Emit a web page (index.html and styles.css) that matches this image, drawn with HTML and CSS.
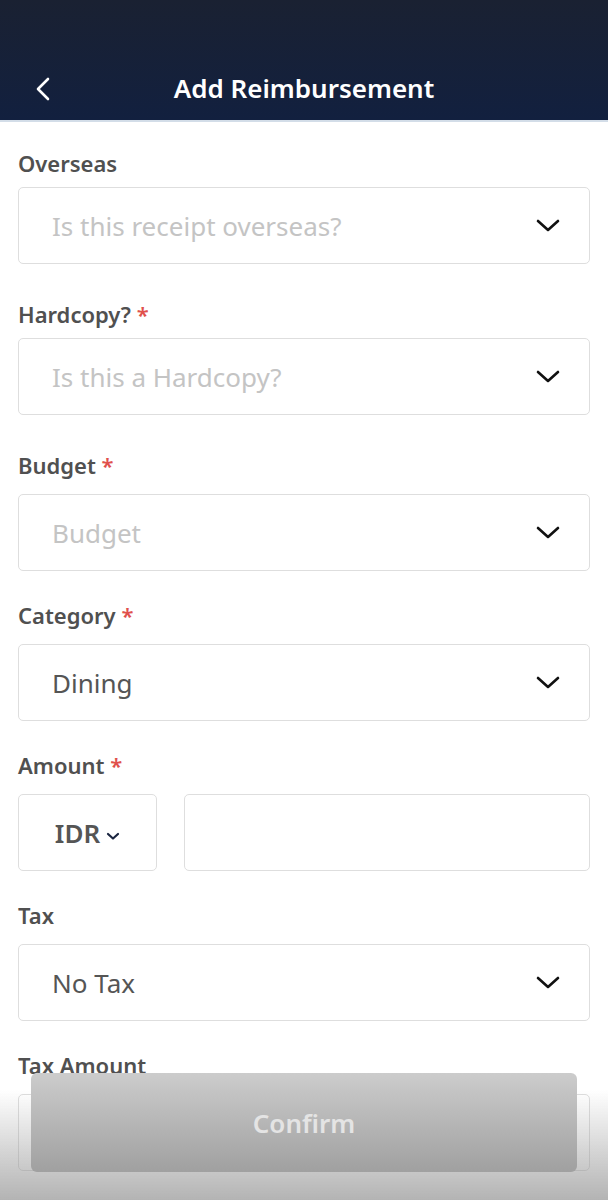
FILE: index.html
```html
<!DOCTYPE html>
<html lang="en">
<head>
    <meta charset="UTF-8">
    <title>Add Reimbursement</title>
    <link rel="stylesheet" href="styles.css">
</head>
<body>
    <header class="topbar">
        <button class="back" aria-label="Back">
            <svg width="14" height="24" viewBox="0 0 14 24"><polyline points="12,2 2,12 12,22" fill="none" stroke="#fff" stroke-width="2.6" stroke-linecap="round" stroke-linejoin="round"/></svg>
        </button>
        <h1 class="title">Add Reimbursement</h1>
    </header>

    <main class="form">
        <div class="field field-first">
            <label class="label label-tight">Overseas</label>
            <div class="select">
                <span class="placeholder">Is this receipt overseas?</span>
                <svg class="chev" width="24" height="14" viewBox="0 0 24 14"><polyline points="2,2 12,11 22,2" fill="none" stroke="#111" stroke-width="2.6" stroke-linecap="round" stroke-linejoin="round"/></svg>
            </div>
        </div>

        <div class="field field-second">
            <label class="label label-tight">Hardcopy? <span class="req">*</span></label>
            <div class="select">
                <span class="placeholder">Is this a Hardcopy?</span>
                <svg class="chev" width="24" height="14" viewBox="0 0 24 14"><polyline points="2,2 12,11 22,2" fill="none" stroke="#111" stroke-width="2.6" stroke-linecap="round" stroke-linejoin="round"/></svg>
            </div>
        </div>

        <div class="field field-third">
            <label class="label">Budget <span class="req">*</span></label>
            <div class="select">
                <span class="placeholder">Budget</span>
                <svg class="chev" width="24" height="14" viewBox="0 0 24 14"><polyline points="2,2 12,11 22,2" fill="none" stroke="#111" stroke-width="2.6" stroke-linecap="round" stroke-linejoin="round"/></svg>
            </div>
        </div>

        <div class="field">
            <label class="label">Category <span class="req">*</span></label>
            <div class="select">
                <span class="value">Dining</span>
                <svg class="chev" width="24" height="14" viewBox="0 0 24 14"><polyline points="2,2 12,11 22,2" fill="none" stroke="#111" stroke-width="2.6" stroke-linecap="round" stroke-linejoin="round"/></svg>
            </div>
        </div>

        <div class="field">
            <label class="label">Amount <span class="req">*</span></label>
            <div class="amount-row">
                <div class="currency">
                    <span>IDR</span>
                    <svg width="14" height="9" viewBox="0 0 14 9"><polyline points="2,2 7,6.5 12,2" fill="none" stroke="#1b2540" stroke-width="2.2" stroke-linecap="round" stroke-linejoin="round"/></svg>
                </div>
                <div class="input"></div>
            </div>
        </div>

        <div class="field">
            <label class="label">Tax</label>
            <div class="select">
                <span class="value">No Tax</span>
                <svg class="chev" width="24" height="14" viewBox="0 0 24 14"><polyline points="2,2 12,11 22,2" fill="none" stroke="#111" stroke-width="2.6" stroke-linecap="round" stroke-linejoin="round"/></svg>
            </div>
        </div>

        <div class="field">
            <label class="label">Tax Amount</label>
            <div class="input"></div>
        </div>
    </main>

    <footer class="footer">
        <button class="confirm" disabled>Confirm</button>
    </footer>
</body>
</html>
```

FILE: styles.css
```css
body {
    margin: 0;
    background-color: white;
    font-family: "Noto Sans", "Open Sans", sans-serif;
}
.topbar {
    height: 122px;
    background: linear-gradient(to bottom, #1a2132, #12203f);
    border-bottom: 2px solid #d3dde8;
    display: flex;
    align-items: flex-end;
    justify-content: center;
    position: relative;
    box-sizing: border-box;
    padding-bottom: 14px;
}
.back {
    position: absolute;
    left: 36px;
    bottom: 19px;
    background: none;
    border: none;
    padding: 0;
    display: flex;
}
.title {
    margin: 0;
    color: white;
    font-size: 26px;
    font-weight: 600;
    line-height: 36px;
}
.form {
    padding: 0 18px 200px;
}
.field {
    margin-top: 30px;
}
.field-first {
    margin-top: 27px;
}
.field-second {
    margin-top: 36px;
}
.field-third {
    margin-top: 36px;
}
.label {
    display: block;
    font-size: 22px;
    line-height: 28px;
    font-weight: 600;
    color: #505050;
    margin-bottom: 15px;
}
.label-tight {
    margin-bottom: 10px;
}
.req {
    color: #e0504c;
}
.select, .input, .currency {
    height: 77px;
    box-sizing: border-box;
    border: 1.5px solid #dedede;
    border-radius: 5px;
    background-color: white;
}
.select {
    display: flex;
    align-items: center;
    justify-content: space-between;
    padding: 0 29px 0 33px;
}
.placeholder, .value {
    font-size: 26px;
    color: #c4c4c4;
}
.value {
    color: #555;
}
.amount-row {
    display: flex;
    gap: 27px;
}
.currency {
    width: 139px;
    display: flex;
    align-items: center;
    justify-content: center;
    gap: 6px;
    font-size: 26px;
    font-weight: 600;
    color: #555;
}
.currency svg {
    margin-top: 8px;
}
.amount-row .input {
    flex: 1;
}
.footer {
    position: fixed;
    left: 0;
    right: 0;
    bottom: 0;
    height: 127px;
    box-sizing: border-box;
    padding: 0 31px 28px;
    background: linear-gradient(to bottom, rgba(150, 150, 150, 0) 17px, rgba(150, 150, 150, 0.72));
}
.confirm {
    width: 100%;
    height: 99px;
    border: none;
    border-radius: 6px;
    background: linear-gradient(to bottom, #cccccc, #a0a0a0);
    color: #e4e4e4;
    font-family: "Noto Sans", "Open Sans", sans-serif;
    font-size: 26px;
    font-weight: 600;
}
```
